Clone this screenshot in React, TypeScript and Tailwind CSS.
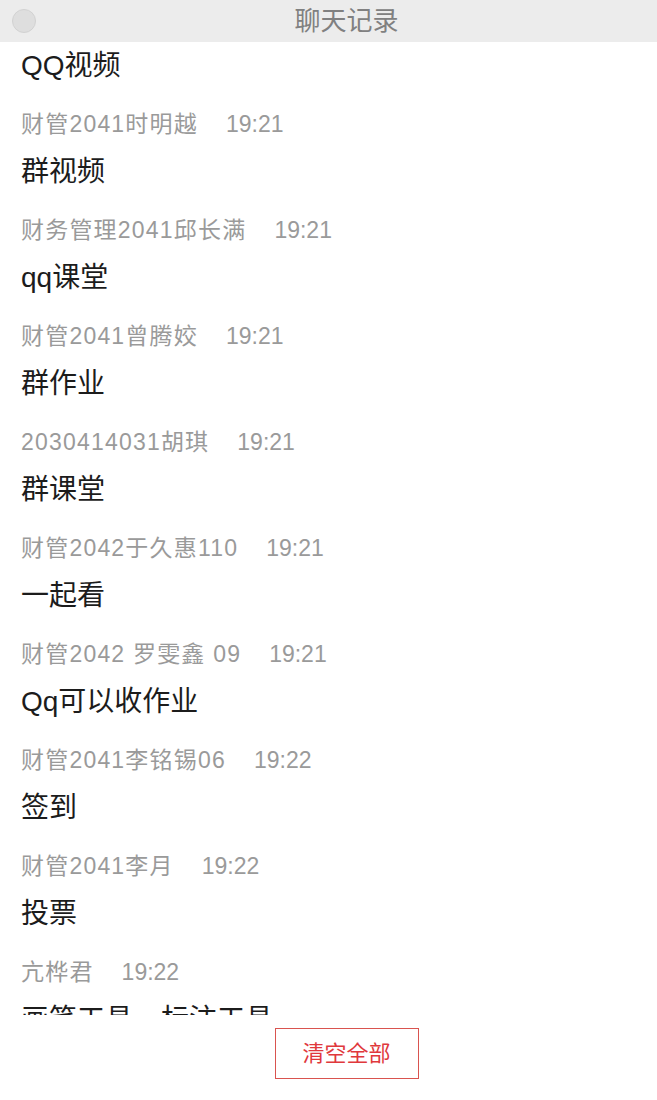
import React from 'react';

const messages = [
  { name: '财管2041时明越', time: '19:21', text: '群视频' },
  { name: '财务管理2041邱长满', time: '19:21', text: 'qq课堂' },
  { name: '财管2041曾腾姣', time: '19:21', text: '群作业' },
  { name: '2030414031胡琪', time: '19:21', text: '群课堂' },
  { name: '财管2042于久惠110', time: '19:21', text: '一起看' },
  { name: '财管2042 罗雯鑫 09', time: '19:21', text: 'Qq可以收作业' },
  { name: '财管2041李铭锡06', time: '19:22', text: '签到' },
  { name: '财管2041李月', time: '19:22', text: '投票' },
  { name: '亢桦君', time: '19:22', text: '画笔工具，标注工具' },
];

const font = { fontFamily: '"Liberation Sans", "Noto Sans CJK SC", sans-serif' };

export default function App() {
  return (
    <div className="flex h-[1100px] w-full flex-col bg-white" style={font}>
      <div className="flex h-[42px] shrink-0 items-center bg-[#ececec]">
        <div className="flex w-[36px] justify-end">
          <div className="h-[24px] w-[24px] rounded-full border border-[#d2d2d2] bg-[#dedede]" />
        </div>
        <div className="flex-1 text-center text-[26px] leading-[42px] text-[#808080]">聊天记录</div>
      </div>

      <div className="h-[973px] shrink-0 overflow-hidden px-[21px]">
        <div className="mb-[10px] text-[28px] leading-[48px] text-[#1c1c1c]">QQ视频</div>
        {messages.map((m, i) => (
          <div key={i} className="mb-[10px]">
            <div className="flex text-[23px] leading-[48px] text-[#9a9a9a]">
              <span className="tracking-[1.2px]">{m.name}</span>
              <span className="ml-[28px]">{m.time}</span>
            </div>
            <div className="text-[28px] leading-[48px] text-[#1c1c1c]">{m.text}</div>
          </div>
        ))}
      </div>

      <div className="flex flex-1 items-start justify-center pl-[36px] pt-[13px]">
        <button className="h-[51px] w-[144px] border border-[#d9534f] bg-white text-[22px] leading-[49px] text-[#e0383c]">
          清空全部
        </button>
      </div>
    </div>
  );
}
